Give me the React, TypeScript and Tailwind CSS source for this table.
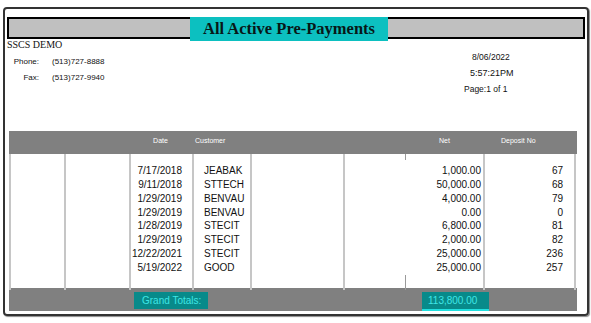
const rows = [
  { date: "7/17/2018", customer: "JEABAK", net: "1,000.00", deposit: "67" },
  { date: "9/11/2018", customer: "STTECH", net: "50,000.00", deposit: "68" },
  { date: "1/29/2019", customer: "BENVAU", net: "4,000.00", deposit: "79" },
  { date: "1/29/2019", customer: "BENVAU", net: "0.00", deposit: "0" },
  { date: "1/28/2019", customer: "STECIT", net: "6,800.00", deposit: "81" },
  { date: "1/29/2019", customer: "STECIT", net: "2,000.00", deposit: "82" },
  { date: "12/22/2021", customer: "STECIT", net: "25,000.00", deposit: "236" },
  { date: "5/19/2022", customer: "GOOD", net: "25,000.00", deposit: "257" },
];

const cols = "grid grid-cols-[55px_65px_63px_58px_93px_140px_93px]";
const line = "border-l-2 border-[#c6c6c6]";

export default function App() {
  return (
    <div className="w-[591px] h-[323px] bg-white pt-[7px] pl-[3px] font-['Liberation_Sans',Arial,sans-serif] text-[#111]">
      <div className="w-[586px] h-[309px] border-2 border-[#333] rounded-[4px] shadow-[1px_1px_1px_#8a8a8a]">
        {/* title bar */}
        <div className="mt-[8px] mx-[2px] h-[22px] border-2 border-black bg-[#c0c0c0] flex items-start">
          <div className="ml-[181px] -mt-[2px] h-[24px] w-[198px] bg-[#0cc0c0] flex items-center justify-center font-['Liberation_Serif',serif] font-bold text-[16.5px] text-[#081818] leading-none">
            All Active Pre-Payments
          </div>
        </div>

        {/* header info */}
        <div className="h-[92px] flex justify-between">
          <div className="pl-[2px]">
            <div className="font-['Liberation_Serif',serif] text-[10px] leading-[12px]">SSCS DEMO</div>
            <div className="mt-[3px] text-[8px] leading-[16px]">
              <div className="flex">
                <span className="w-[32px] text-right">Phone:</span>
                <span className="ml-[13px]">(513)727-8888</span>
              </div>
              <div className="flex">
                <span className="w-[32px] text-right">Fax:</span>
                <span className="ml-[13px]">(513)727-9940</span>
              </div>
            </div>
          </div>
          <div className="w-[123px] pt-[10px] leading-[16px]">
            <div className="ml-[8px] text-[8.5px]">8/06/2022</div>
            <div className="ml-[6px] text-[9px]">5:57:21PM</div>
            <div className="text-[8.5px]">Page:1 of 1</div>
          </div>
        </div>

        {/* table */}
        <div className="ml-[4px] w-[568px]">
          <div className={`${cols} h-[23px] bg-[#808080] text-white text-[7px] leading-[9px] pt-[5px]`}>
            <div />
            <div />
            <div className="text-center">Date</div>
            <div className="pl-[3px]">Customer</div>
            <div />
            <div className="pl-[96px]">Net</div>
            <div className="pl-[18px]">Deposit No</div>
          </div>

          <div className={`${cols} h-[134px] text-[10px] leading-[13.85px]`}>
            <div className={line} />
            <div className={line} />
            <div className={`${line} pt-[10px] pr-[10px] text-right`}>
              {rows.map((r, i) => (
                <div key={i}>{r.date}</div>
              ))}
            </div>
            <div className={`${line} pt-[10px] pl-[10px]`}>
              {rows.map((r, i) => (
                <div key={i}>{r.customer}</div>
              ))}
            </div>
            <div className={line} />
            <div className={`${line} flex flex-col`}>
              <div className="ml-[60px] w-px h-[6px] bg-[#9a9a9a]" />
              <div className="pt-[4px] pr-[2px] text-right">
                {rows.map((r, i) => (
                  <div key={i}>{r.net}</div>
                ))}
              </div>
              <div className="mt-auto ml-[60px] w-px h-[15px] bg-[#9a9a9a]" />
            </div>
            <div className={`${line} border-r-2 pt-[10px] pr-[11px] text-right`}>
              {rows.map((r, i) => (
                <div key={i}>{r.deposit}</div>
              ))}
            </div>
          </div>

          <div className="h-[23px] bg-[#808080] flex items-start pt-[4px] text-[10px] text-[#3fe6e6]">
            <div className="ml-[125px] w-[74px] h-[17px] bg-[#088a8a] pl-[8px] leading-[17px]">Grand Totals:</div>
            <div className="ml-[214px] w-[67px] h-[19px] bg-[#088a8a] border-b-2 border-[#22e0e0] pl-[6px] leading-[17px]">
              113,800.00
            </div>
          </div>
        </div>
      </div>
    </div>
  );
}
